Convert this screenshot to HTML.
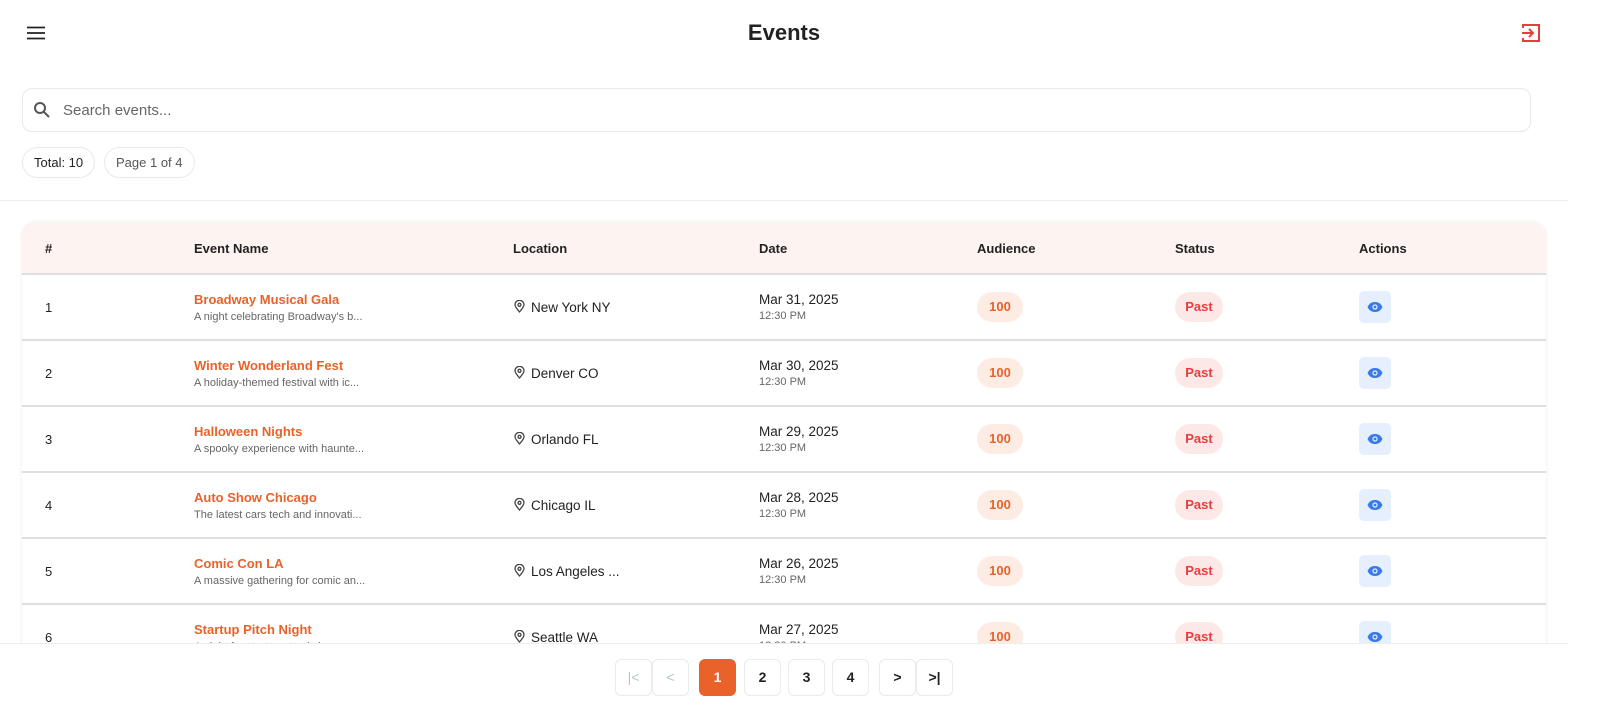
<!DOCTYPE html>
<html><head><meta charset="utf-8"><style>
*{box-sizing:border-box;margin:0;padding:0}
body{width:1600px;height:724px;overflow:hidden;background:#fff;font-family:"Liberation Sans",sans-serif;color:#222;position:relative}
.abs{position:absolute}
.title{left:0;width:1568px;top:20px;text-align:center;font-size:22px;font-weight:bold;color:#222}
.search{left:22px;top:88px;width:1509px;height:44px;border:1px solid #e6eaea;border-radius:10px}
.search span{position:absolute;left:40px;top:13px;font-size:15px;color:#666}
.chip{top:147px;height:31px;border:1px solid #e6eaea;border-radius:16px;font-size:13px;line-height:29px;padding:0 11px}
.hr{left:0;top:200px;width:1568px;height:1px;background:#eceeee}
.table{left:22px;top:222px;width:1524px;height:480px;border-radius:14px 14px 0 0;overflow:hidden;box-shadow:0 0 3px rgba(0,0,0,.1)}
.head{height:53px;background:#fdf4f1;border-bottom:2px solid #dddfe3;position:relative;font-size:13px;font-weight:bold}
.row{height:66px;border-bottom:2px solid #dddfe3;position:relative;font-size:13px}
.c{position:absolute}
.head .c{top:19px}
.name{font-weight:bold;color:#e8622a;font-size:13px}
.desc{font-size:11px;color:#666;margin-top:4px}
.pill{position:absolute;top:17px;height:30px;border-radius:15px;font-weight:bold;font-size:13px;line-height:30px;text-align:center}
.aud{left:955px;width:46px;background:#fdece4;color:#e8622a}
.past{left:1153px;width:48px;background:#fde8e8;color:#e53e3e}
.eye{position:absolute;left:1337px;top:16px;width:32px;height:32px;border-radius:5px;background:#e6effd;display:flex;align-items:center;justify-content:center}
.foot{left:0;top:643px;width:1568px;height:81px;background:#fff;border-top:1px solid #eceeee}
.pb{position:absolute;top:15px;width:37px;height:37px;border:1px solid #e8ecec;border-radius:6px;text-align:center;line-height:35px;font-size:14px;font-weight:bold;color:#222;background:#fff}
</style></head><body>
<svg class="abs" style="left:27px;top:26px" width="19" height="14" viewBox="0 0 19 14"><path d="M0 1.5h18M0 7h18M0 12.5h18" stroke="#222" stroke-width="1.8"/></svg>
<div class="abs title">Events</div>
<svg class="abs" style="left:1521px;top:23px" width="20" height="20" viewBox="0 0 20 20" fill="none" stroke="#e53e3e" stroke-width="2"><path d="M2 5V2h16v16H2v-3"/><path d="M1 10h11M8 6l4 4-4 4"/></svg>
<div class="abs search"><svg style="position:absolute;left:10px;top:12px" width="18" height="18" viewBox="0 0 18 18" fill="none" stroke="#555" stroke-width="2"><circle cx="7" cy="7" r="5"/><path d="M11 11l5 5"/></svg><span>Search events...</span></div>
<div class="abs chip" style="left:22px">Total: 10</div>
<div class="abs chip" style="left:104px;color:#555">Page 1 of 4</div>
<div class="abs hr"></div>
<div class="abs table">
<div class="head"><div class="c" style="left:23px">#</div><div class="c" style="left:172px">Event Name</div><div class="c" style="left:491px">Location</div><div class="c" style="left:737px">Date</div><div class="c" style="left:955px">Audience</div><div class="c" style="left:1153px">Status</div><div class="c" style="left:1337px">Actions</div></div>
<div id="rows"></div>
</div>
<script>
var d=[["Broadway Musical Gala","A night celebrating Broadway's b...","New York NY","Mar 31, 2025"],["Winter Wonderland Fest","A holiday-themed festival with ic...","Denver CO","Mar 30, 2025"],["Halloween Nights","A spooky experience with haunte...","Orlando FL","Mar 29, 2025"],["Auto Show Chicago","The latest cars tech and innovati...","Chicago IL","Mar 28, 2025"],["Comic Con LA","A massive gathering for comic an...","Los Angeles ...","Mar 26, 2025"],["Startup Pitch Night","A night for startups to pitch...","Seattle WA","Mar 27, 2025"]];
var h="";d.forEach(function(r,i){h+='<div class="row"><div class="c" style="left:23px;top:25px">'+(i+1)+'</div><div class="c" style="left:172px;top:17px"><div class="name">'+r[0]+'</div><div class="desc">'+r[1]+'</div></div><div class="c" style="left:492px;top:25px;font-size:13.5px"><svg width="11" height="13" viewBox="0 0 11 13" fill="none" stroke="#444" stroke-width="1.3" style="vertical-align:-1px;margin-right:6px"><path d="M5.5 12C2 8 1 6.5 1 4.8a4.5 4.5 0 0 1 9 0C10 6.5 9 8 5.5 12z"/><circle cx="5.5" cy="4.8" r="1.5"/></svg>'+r[2]+'</div><div class="c" style="left:737px;top:17px"><div style="font-size:13.5px">'+r[3]+'</div><div style="font-size:11px;color:#666;margin-top:3px">12:30 PM</div></div><div class="pill aud">100</div><div class="pill past">Past</div><div class="eye"><svg width="16" height="12" viewBox="0 0 16 12"><path d="M0.5 6C2.5 2 5 1 8 1s5.5 1 7.5 5c-2 4-4.5 5-7.5 5S2.5 10 .5 6z" fill="#3b7be8"/><circle cx="8" cy="6" r="2.6" fill="#e6effd"/><circle cx="8" cy="6" r="1.4" fill="#3b7be8"/></svg></div></div>';});
document.getElementById("rows").innerHTML=h;
</script>
<div class="abs foot">
<div class="pb" style="left:615px;color:#b5c4c4;font-weight:normal">|&lt;</div>
<div class="pb" style="left:652px;color:#b5c4c4;font-weight:normal">&lt;</div>
<div class="pb" style="left:699px;background:#e8622a;border-color:#e8622a;color:#fff">1</div>
<div class="pb" style="left:744px">2</div>
<div class="pb" style="left:788px">3</div>
<div class="pb" style="left:832px">4</div>
<div class="pb" style="left:879px">&gt;</div>
<div class="pb" style="left:916px">&gt;|</div>
</div>
</body></html>
